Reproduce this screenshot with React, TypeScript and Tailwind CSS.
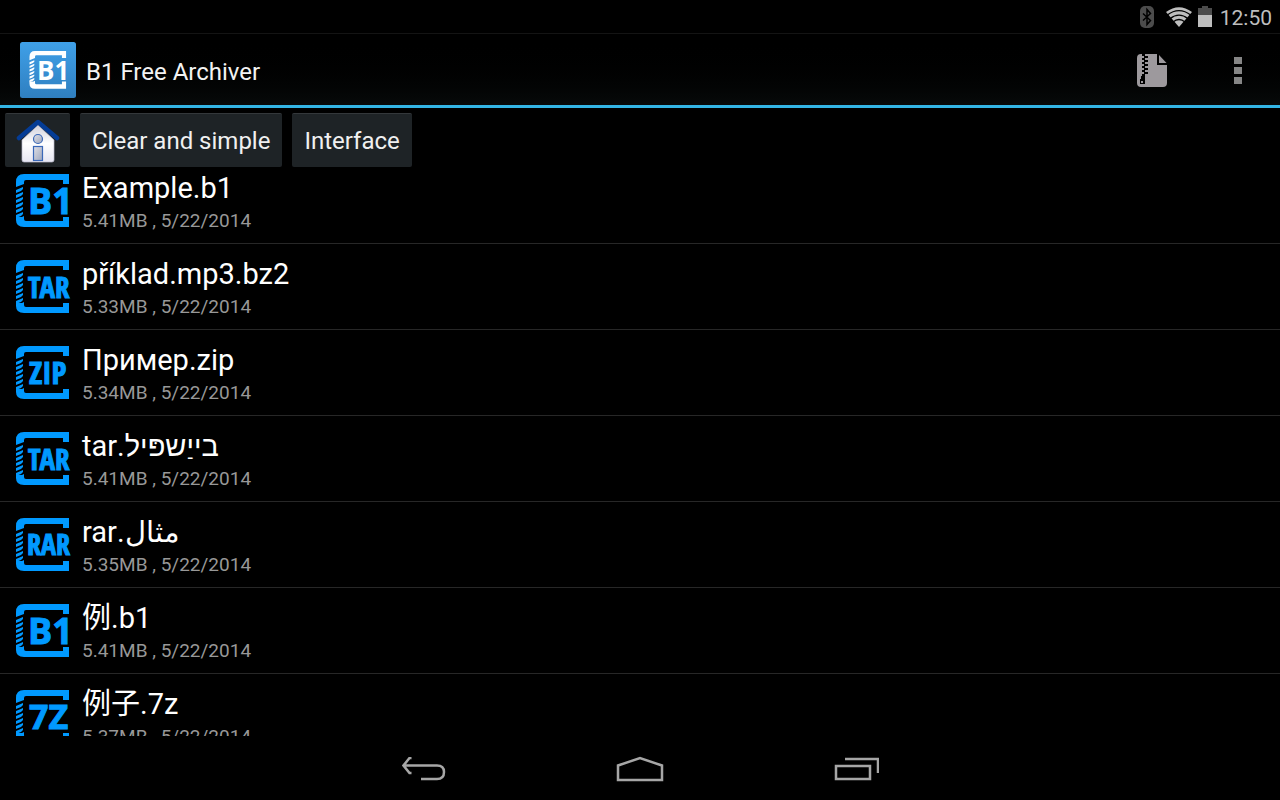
import { useState } from 'react';

type Kind = 'B1' | 'TAR' | 'ZIP' | 'RAR' | '7Z';
type FileEntry = { name: string; size: string; date: string; kind: Kind };

const files: FileEntry[] = [
  { name: 'Example.b1', size: '5.41MB', date: '5/22/2014', kind: 'B1' },
  { name: 'příklad.mp3.bz2', size: '5.33MB', date: '5/22/2014', kind: 'TAR' },
  { name: 'Пример.zip', size: '5.34MB', date: '5/22/2014', kind: 'ZIP' },
  { name: 'בייַשפּיל.tar', size: '5.41MB', date: '5/22/2014', kind: 'TAR' },
  { name: 'مثال.rar', size: '5.35MB', date: '5/22/2014', kind: 'RAR' },
  { name: '例.b1', size: '5.41MB', date: '5/22/2014', kind: 'B1' },
  { name: '例子.7z', size: '5.37MB', date: '5/22/2014', kind: '7Z' },
];

const labels: Record<Kind, { size: number; x: number; y: number; family: string }> = {
  B1: { size: 36, x: 12, y: 40, family: 'Open Sans' },
  '7Z': { size: 34, x: 13, y: 39, family: 'Open Sans' },
  TAR: { size: 29, x: 12, y: 38, family: 'Open Sans Condensed' },
  ZIP: { size: 31, x: 13, y: 38, family: 'Open Sans Condensed' },
  RAR: { size: 28, x: 11, y: 37, family: 'Open Sans Condensed' },
};

function ZipperFrame() {
  return (
    <>
      <path d="M0 13V8Q0 0 8 0H53V10H47V6H10Q8 6 8 8V10Z" />
      <path d="M0 43V46Q0 53 8 53H53V43H47V47H10Q8 47 8 45V42L6 43Z" />
      {[15, 20, 25, 30, 35, 40].map((y) => (
        <path key={y} d={`M0 ${y + 1}L7 ${y - 2}V${y}L5 ${y + 2}L0 ${y + 4}Z`} />
      ))}
    </>
  );
}

function ArchiveIcon({ kind }: { kind: Kind }) {
  const l = labels[kind];
  return (
    <svg viewBox="0 0 60 54" className="h-[54px] w-[60px] shrink-0 fill-[#0099ff]" aria-hidden="true">
      <ZipperFrame />
      <text
        x={l.x}
        y={l.y}
        fontSize={l.size}
        fontWeight={700}
        fontFamily={`"${l.family}", "Open Sans", sans-serif`}
        stroke="#0099ff"
        strokeWidth="1"
      >
        {kind}
      </text>
    </svg>
  );
}

function AppLogo() {
  return (
    <svg viewBox="0 0 56 56" className="size-14 shrink-0" aria-hidden="true">
      <defs>
        <linearGradient id="logo" x1="0" y1="0" x2="0" y2="1">
          <stop offset="0" stopColor="#3fa0e8" />
          <stop offset="1" stopColor="#2f7fc0" />
        </linearGradient>
      </defs>
      <rect width="56" height="56" rx="2.500" fill="url(#logo)" />
      <g fill="#fff" transform="translate(9.500 9) scale(.69 .71)">
        <ZipperFrame />
      </g>
      <text x="17" y="37.500" fontSize="26" fontWeight={700} fontFamily='"Open Sans", sans-serif' fill="#fff">
        B1
      </text>
    </svg>
  );
}

function StatusBar() {
  return (
    <div className="flex h-[33px] shrink-0 items-center justify-end pr-2 text-[#bebebe]">
      <svg viewBox="0 0 14 22" className="h-[22px] w-3.5" aria-label="Bluetooth">
        <rect width="14" height="22" rx="5" fill="#4c4c4c" />
        <path d="M3 7.500L10.500 14.500L7 18.500V3.500L10.500 7.500L3 14.500" fill="none" stroke="#000" strokeWidth="1.500" />
      </svg>
      <svg viewBox="0 0 26 20" className="ml-3 h-5 w-[26px]" aria-label="Wi-Fi">
        <path d="M0 5Q13-4.500 26 5L13 20Z" fill="#bebebe" />
        <path d="M1 8.200Q13-1 25 8.200M4 11.700Q13 4.500 22 11.700M7 15Q13 10 19 15" fill="none" stroke="#000" strokeWidth="1.300" />
      </svg>
      <svg viewBox="0 0 14 21" className="ml-1.5 h-[21px] w-3.5" aria-label="Battery">
        <path d="M4 0H10V2H14V9H0V2H4Z" fill="#4c4c4c" />
        <path d="M0 9H14V21H0Z" fill="#bebebe" />
      </svg>
      <time className="ml-2 pt-0.5 text-[21px] leading-6">12:50</time>
    </div>
  );
}

function ZipFileIcon() {
  return (
    <svg viewBox="0 0 30 33" className="h-[33px] w-[30px]" aria-hidden="true">
      <path d="M4 0H20V11H30V29Q30 33 26 33H4Q0 33 0 29V4Q0 0 4 0ZM22 1L29.500 9H22Z" fill="#9d999d" />
      <path
        d="M5 0H8V2H11V4H8V6H11V8H8V10H11V12H8V14H11V16H8V18H11V20H8V22H5V20H7V18H5V16H7V14H5V12H7V10H5V8H7V6H5V4H7V2H5Z"
        fill="#000"
      />
      <path d="M4 22H8V30H3V25H4ZM4 27V29H6V27Z" fill="#000" fillRule="evenodd" />
    </svg>
  );
}

function HomeIcon() {
  return (
    <svg viewBox="0 0 44 44" className="size-11" aria-hidden="true">
      <defs>
        <linearGradient id="wall" x1="0" y1="0" x2="0" y2="1">
          <stop offset="0" stopColor="#cfcfdb" />
          <stop offset=".5" stopColor="#ffffff" />
          <stop offset="1" stopColor="#e6e6f2" />
        </linearGradient>
        <linearGradient id="glass" x1="0" y1="0" x2="1" y2="1">
          <stop offset="0" stopColor="#e0e0e6" />
          <stop offset="1" stopColor="#9ea6bd" />
        </linearGradient>
      </defs>
      <path d="M22 6L38 21V41Q38 43 36 43H8Q6 43 6 41V21Z" fill="url(#wall)" stroke="#b9b9cc" strokeWidth=".7" />
      <path d="M3 19L22 3L41 19" fill="none" stroke="#043c96" strokeWidth="4.500" strokeLinecap="round" strokeLinejoin="round" />
      <circle cx="22" cy="20" r="4.500" fill="url(#glass)" stroke="#3a68b8" strokeWidth="1.200" />
      <rect x="17.500" y="27.500" width="9" height="14" fill="url(#glass)" stroke="#3a68b8" strokeWidth="1.200" />
    </svg>
  );
}

const crumb =
  'flex items-center justify-center rounded-xs border-t border-[#34383b] bg-[#1e2326] text-[24px] leading-7 text-[#f0f0f0]';

export default function App() {
  const [path, setPath] = useState(['Clear and simple', 'Interface']);

  return (
    <div className="flex h-screen flex-col overflow-hidden bg-black font-['Roboto','Liberation_Sans','Noto_Sans_CJK_SC',sans-serif] text-white">
      <StatusBar />
      <header className="flex h-[75px] shrink-0 items-center border-t border-b-3 border-t-[#141414] border-b-[#33b5e5] bg-linear-to-b from-black to-[#070a0a] pl-5">
        <AppLogo />
        <h1 className="ml-2.5 flex-1 pt-1 text-[24px] leading-7 text-[#f3f3f3]">B1 Free Archiver</h1>
        <button aria-label="New archive" className="flex h-full w-[86px] items-center justify-center pt-0.5">
          <ZipFileIcon />
        </button>
        <button aria-label="More options" className="flex h-full w-[85px] items-center justify-center pt-0.5">
          <svg viewBox="0 0 8 28" className="h-7 w-2 fill-[#868686]" aria-hidden="true">
            <path d="M0 0H8V7H0ZM0 10H8V17H0ZM0 20H8V27H0Z" />
          </svg>
        </button>
      </header>

      <nav aria-label="Path" className="flex h-[60px] shrink-0 gap-2.5 pt-[5px] pb-px pl-[5px]">
        <button aria-label="Home" className={`${crumb} w-[65px]`} onClick={() => setPath([])}>
          <HomeIcon />
        </button>
        {path.map((p, i) => (
          <button key={p} className={`${crumb} px-3`} onClick={() => setPath(path.slice(0, i + 1))}>
            {p}
          </button>
        ))}
      </nav>

      <main className="min-h-0 flex-1 overflow-hidden">
        <ul>
          {files.map((f) => (
            <li key={f.name} className="border-b border-[#272727] pt-4 pb-2 first:pt-1.5">
              <button className="flex w-full gap-1.5 pl-4 text-left">
                <ArchiveIcon kind={f.kind} />
                <span className="flex flex-col items-start">
                  <bdi className="h-8 text-[29px] leading-7">{f.name}</bdi>
                  <span className="pt-px text-[19px] leading-7 text-[#989898]">
                    {f.size} , {f.date}
                  </span>
                </span>
              </button>
            </li>
          ))}
        </ul>
      </main>

      <footer className="flex h-16 shrink-0 items-center justify-center gap-[120px] pt-0.5">
        <button aria-label="Back" className="flex h-full w-24 items-center justify-center">
          <svg viewBox="0 0 44 24" className="h-6 w-11 fill-none stroke-[#a6a6a6] stroke-[2.500]" aria-hidden="true">
            <path d="M9.500 1H7.500L1.500 8.500L7.500 16H9.500M2 8.500H35Q42 8.500 42 15Q42 22 35 22H19" />
          </svg>
        </button>
        <button aria-label="Home screen" className="flex h-full w-24 items-center justify-center">
          <svg viewBox="0 0 48 26" className="h-[26px] w-12 fill-none stroke-[#a6a6a6] stroke-[2.500]" aria-hidden="true">
            <path d="M2 24V9.500L24 2L46 9.500V24Z" />
          </svg>
        </button>
        <button aria-label="Recent apps" className="flex h-full w-24 items-center justify-center">
          <svg viewBox="0 0 46 24" className="h-6 w-[46px] fill-none stroke-[#a6a6a6] stroke-[2.500]" aria-hidden="true">
            <path d="M3 9H37V22H3ZM12 2H45V16" />
          </svg>
        </button>
      </footer>
    </div>
  );
}
